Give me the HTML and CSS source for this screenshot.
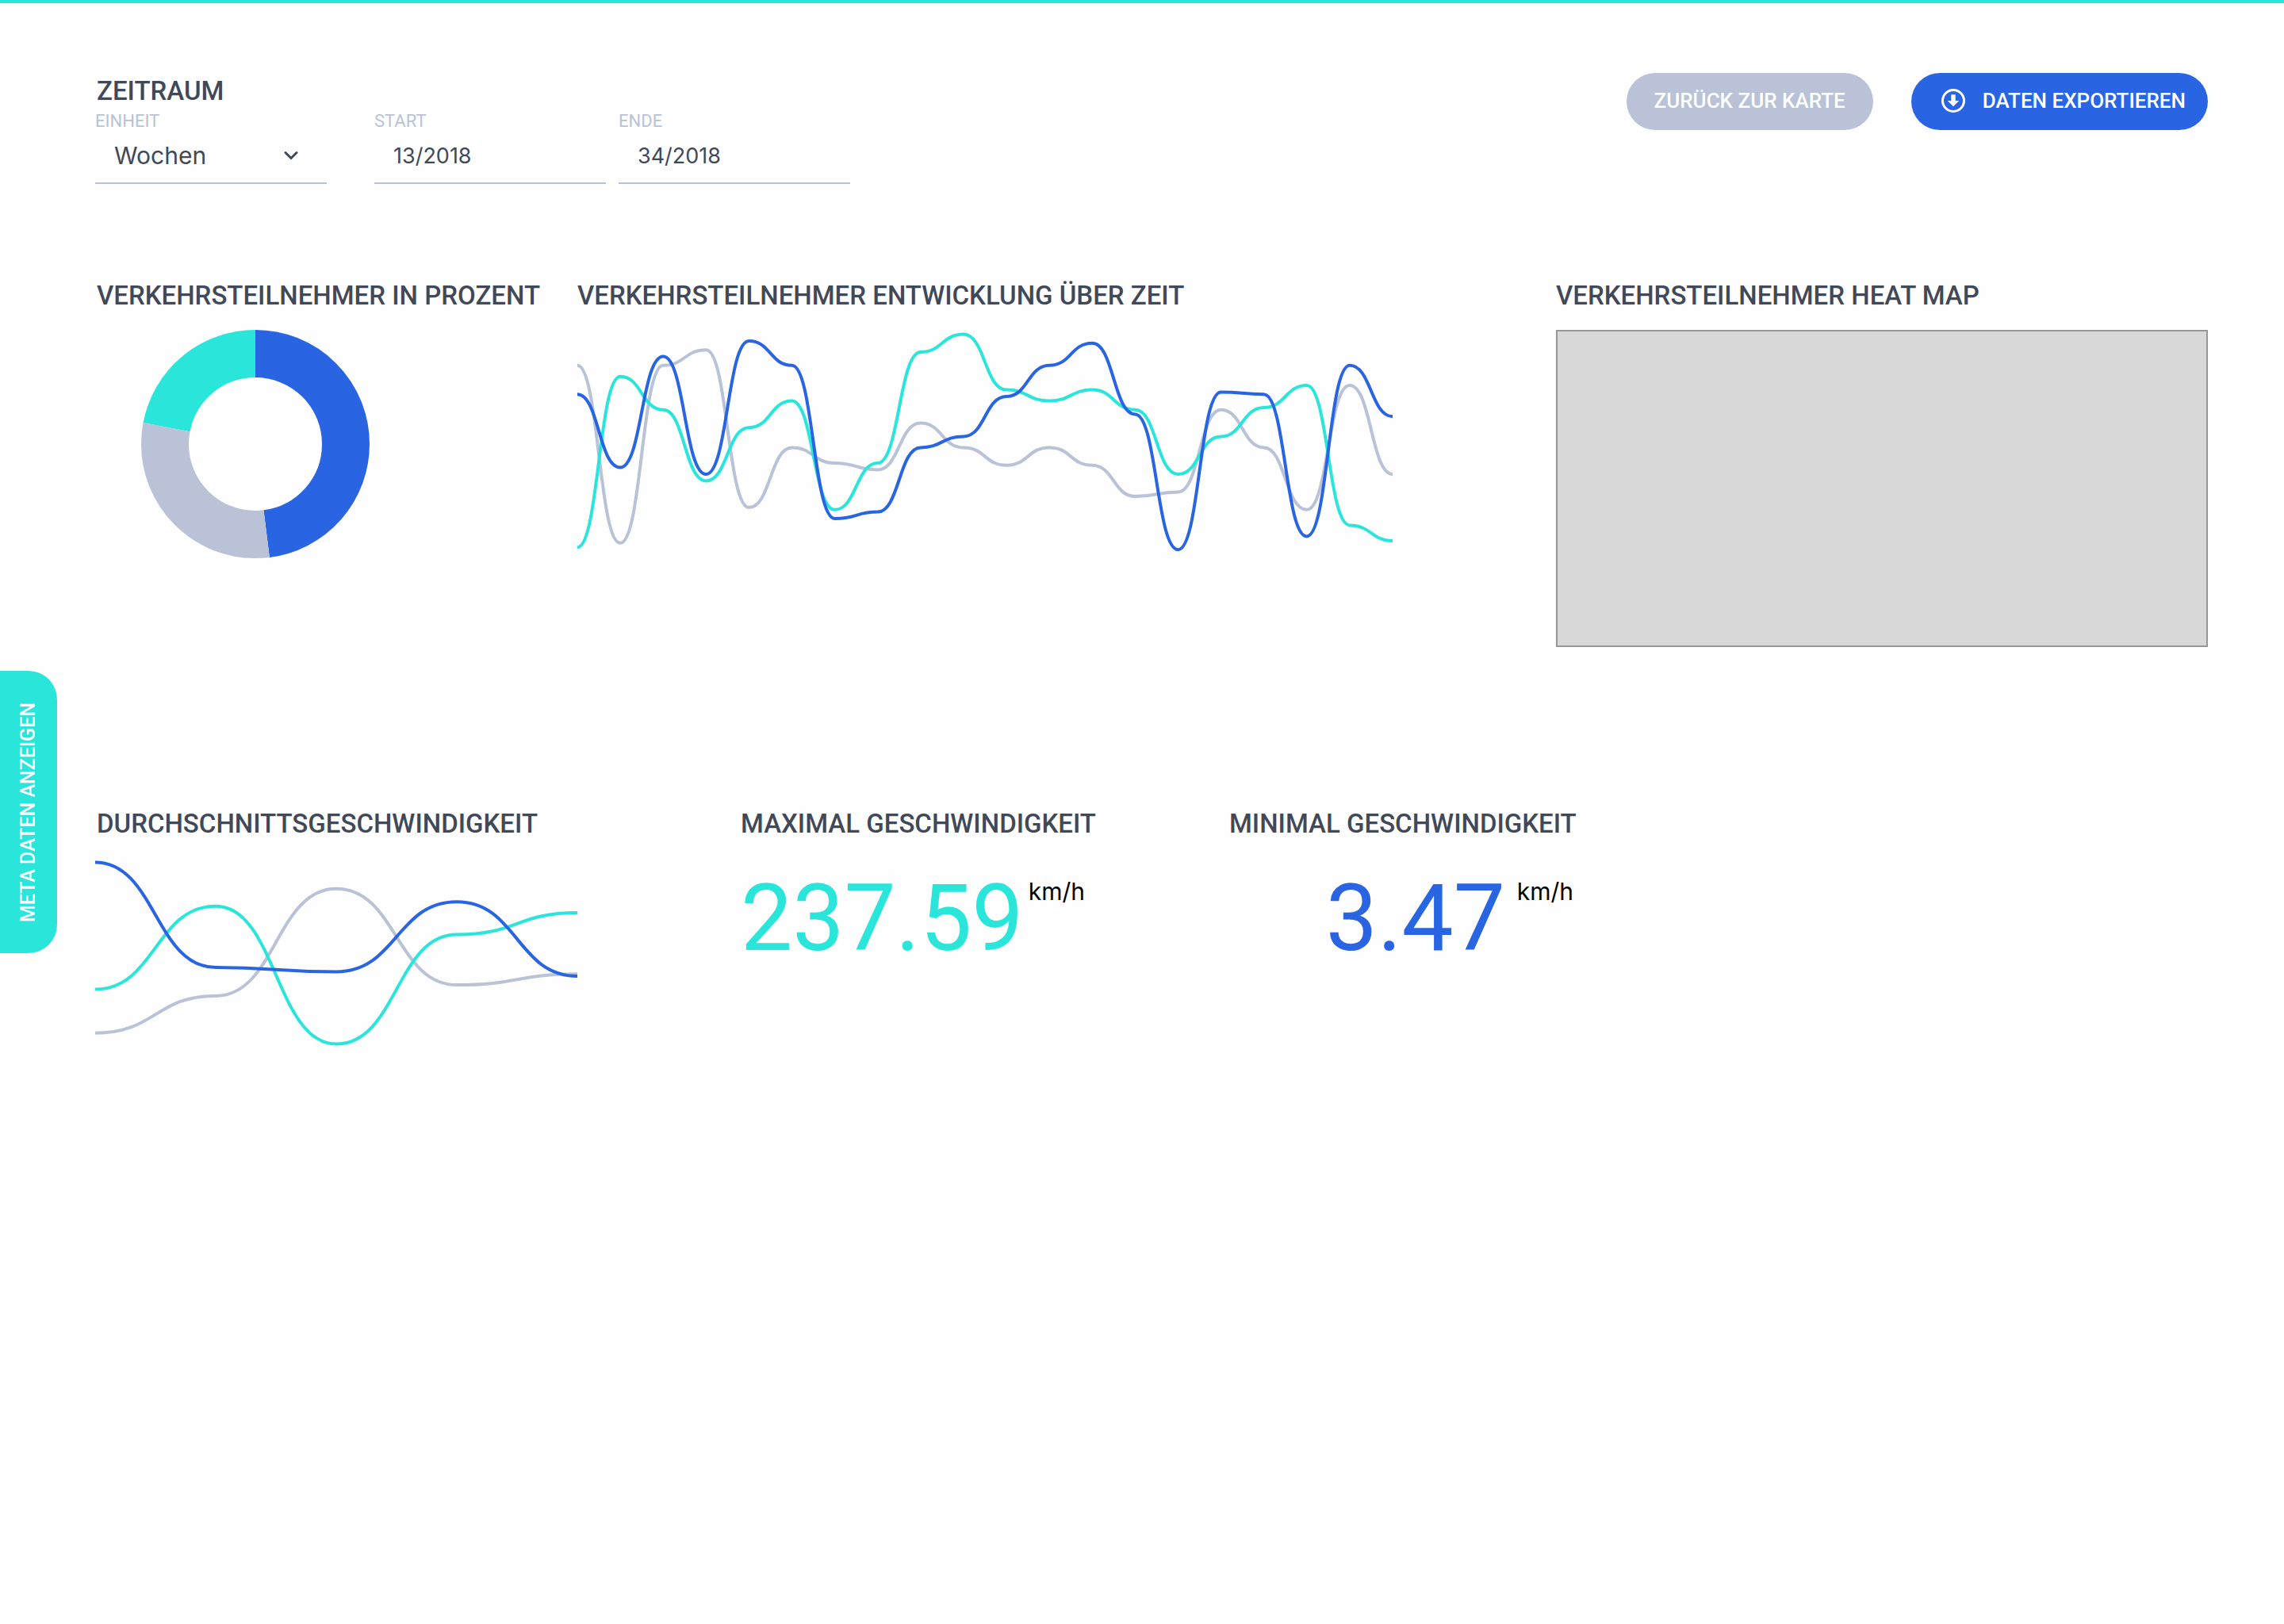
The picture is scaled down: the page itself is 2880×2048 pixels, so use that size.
FILE: index.html
```html
<!DOCTYPE html>
<html lang="de">
<head>
<meta charset="utf-8">
<meta name="viewport" content="width=device-width, initial-scale=1">
<title>Verkehrsdaten</title>
<link rel="stylesheet" href="styles.css">
</head>
<body>
<header class="header">
  <form class="period">
    <h2 class="title title-edge">ZEITRAUM</h2>
    <div class="fields">
      <div class="field field-unit">
        <label class="label" for="unit">EINHEIT</label>
        <div class="select-wrap">
          <select class="control control-select" id="unit"><option>Wochen</option><option>Monate</option></select>
          <svg class="chevron" viewBox="0 0 18 12" aria-hidden="true"><path d="M2 2.500l7 7 7-7"/></svg>
        </div>
      </div>
      <div class="field">
        <label class="label" for="start">START</label>
        <input class="control" id="start" type="text" value="13/2018">
      </div>
      <div class="field">
        <label class="label" for="end">ENDE</label>
        <input class="control" id="end" type="text" value="34/2018">
      </div>
    </div>
  </form>
  <div class="actions">
    <button class="button button-muted" type="button">ZURÜCK ZUR KARTE</button>
    <button class="button button-primary" type="button">
      <svg class="icon" viewBox="0 0 30 30" aria-hidden="true"><circle cx="15" cy="15" r="13.5"/><path d="M12.300 7.300h5.400V15h4.600L15 22.300 7.700 15h4.600z"/></svg>
      DATEN EXPORTIEREN
    </button>
  </div>
</header>

<main>
  <div class="row row-top">
    <section class="panel">
      <h2 class="title title-edge">VERKEHRSTEILNEHMER IN PROZENT</h2>
      <svg class="donut" viewBox="0 0 288 288" role="img" aria-label="Verkehrsteilnehmer in Prozent">
        <g transform="rotate(-90 144 144)">
          <circle class="line-blue" cx="144" cy="144" r="114" pathLength="100" stroke-dasharray="48 52"/>
          <circle class="line-gray" cx="144" cy="144" r="114" pathLength="100" stroke-dasharray="30 70" stroke-dashoffset="-48"/>
          <circle class="line-teal" cx="144" cy="144" r="114" pathLength="100" stroke-dasharray="22 78" stroke-dashoffset="-78"/>
        </g>
      </svg>
    </section>
    <section class="panel panel-spaced">
      <h2 class="title">VERKEHRSTEILNEHMER ENTWICKLUNG ÜBER ZEIT</h2>
      <svg class="chart chart-time" viewBox="0 0 190 100" preserveAspectRatio="none" role="img" aria-label="Entwicklung über Zeit">
        <path class="line-gray" d="M0 16C5 16 5 96 10 96S15 16 20 16S25 9 30 9S35 80 40 80S45 53 50 53S55 60 60 60S65 63 70 63S75 42 80 42S85 53 90 53S95 61 100 61S105 53 110 53S115 61 120 61S125 75 130 75S135 73 140 73S145 36 150 36S155 53 160 53S165 81 170 81S175 25 180 25S185 65 190 65"/>
        <path class="line-teal" d="M0 98C5 98 5 21 10 21S15 36 20 36S25 68 30 68S35 44 40 44S45 32 50 32S55 81 60 81S65 60 70 60S75 10 80 10S85 2 90 2S95 27 100 27S105 32 110 32S115 27 120 27S125 36 130 36S135 65 140 65S145 48 150 48S155 35 160 35S165 25 170 25S175 88 180 88S185 95 190 95"/>
        <path class="line-blue" d="M0 29C5 29 5 62 10 62S15 12 20 12S25 65 30 65S35 5 40 5S45 16 50 16S55 85 60 85S65 82 70 82S75 53 80 53S85 48 90 48S95 30 100 30S105 16 110 16S115 6 120 6S125 38 130 38S135 99 140 99S145 28 150 28S155 29 160 29S165 93 170 93S175 16 180 16S185 39 190 39"/>
      </svg>
    </section>
    <section class="panel">
      <h2 class="title">VERKEHRSTEILNEHMER HEAT MAP</h2>
      <div class="heatmap"></div>
    </section>
  </div>

  <div class="row row-speed">
    <section class="panel panel-spaced">
      <h2 class="title title-edge">DURCHSCHNITTSGESCHWINDIGKEIT</h2>
      <svg class="chart chart-speed" viewBox="0 0 40 100" preserveAspectRatio="none" role="img" aria-label="Durchschnittsgeschwindigkeit">
        <path class="line-gray" d="M0 80C5 80 5 63 10 63S15 14 20 14S25 58 30 58S35 53 40 53"/>
        <path class="line-teal" d="M0 60C5 60 5 22 10 22S15 85 20 85S25 35 30 35S35 25 40 25"/>
        <path class="line-blue" d="M0 2C5 2 5 50 10 50S15 52 20 52S25 20 30 20S35 54 40 54"/>
      </svg>
    </section>
    <section class="panel">
      <h2 class="title">MAXIMAL GESCHWINDIGKEIT</h2>
      <p class="stat"><span class="value value-teal">237.59</span><span class="unit">km/h</span></p>
    </section>
    <section class="panel">
      <h2 class="title">MINIMAL GESCHWINDIGKEIT</h2>
      <p class="stat"><span class="value value-blue">3.47</span><span class="unit">km/h</span></p>
    </section>
  </div>
</main>

<button class="meta-tab" type="button">META DATEN ANZEIGEN</button>
</body>
</html>
```
FILE: styles.css
```css
:root {
  --teal: #29e5da;
  --blue: #2965e3;
  --gray: #b9c2d7;
  --dark: #414857;
}

* {
  box-sizing: border-box;
}

body {
  margin: 0;
  min-height: 100vh;
  padding: 0 96px 0 120px;
  border-top: 4px solid var(--teal);
  background: linear-gradient(#fff, #fefefe 300px);
  color: var(--dark);
  font-family: Roboto, sans-serif;
}

.header {
  display: flex;
  justify-content: space-between;
  align-items: flex-start;
  padding-top: 88px;
}

.title {
  margin: 0;
  font-size: 33px;
  line-height: 46px;
  font-weight: 500;
  white-space: nowrap;
}

.title-edge {
  padding-left: 2px;
}

.fields {
  display: flex;
  gap: 16px;
}

.field {
  display: flex;
  flex-direction: column;
  width: 292px;
}

.field-unit {
  margin-right: 44px;
}

.label {
  color: var(--gray);
  font-size: 22px;
  line-height: 30px;
}

.select-wrap {
  position: relative;
}

.control {
  display: block;
  width: 100%;
  height: 64px;
  margin: 0;
  padding: 0 24px 6px;
  border: 0;
  border-bottom: 2px solid var(--gray);
  border-radius: 0;
  background: none;
  appearance: none;
  color: var(--dark);
  font-family: Inter, sans-serif;
  font-size: 27px;
  font-weight: 400;
}

.control-select {
  font-size: 30px;
}

.chevron {
  position: absolute;
  right: 36px;
  top: 22px;
  width: 18px;
  height: 12px;
  fill: none;
  stroke: var(--dark);
  stroke-width: 3;
  stroke-linecap: round;
  pointer-events: none;
}

.actions {
  display: flex;
  gap: 48px;
}

.button {
  display: flex;
  align-items: center;
  height: 72px;
  padding: 0 35px 2px;
  border: 0;
  border-radius: 36px;
  color: #fff;
  font-family: inherit;
  font-size: 26px;
  font-weight: 500;
  white-space: nowrap;
}

.button-muted {
  background: var(--gray);
}

.button-primary {
  gap: 22px;
  padding: 0 28px 2px 38px;
  background: var(--blue);
}

.icon {
  width: 30px;
  height: 30px;
  fill: none;
  stroke: #fff;
  stroke-width: 3;
}

.icon path {
  fill: #fff;
  stroke: none;
}

.row {
  display: grid;
}

.row-top {
  grid-template-columns: 608fr 1234fr 822fr;
  margin-top: 118px;
}

.row-speed {
  grid-template-columns: 814fr 616fr 1234fr;
  margin-top: 200px;
}

.panel {
  display: flex;
  flex-direction: column;
  gap: 20px;
  min-width: 0;
}

.panel-spaced {
  padding-right: 206px;
}

.donut {
  width: 288px;
  height: 288px;
  margin-left: 58px;
  fill: none;
  stroke-width: 60;
}

.chart {
  width: 100%;
  fill: none;
  stroke-width: 4;
}

.chart path {
  vector-effect: non-scaling-stroke;
}

.chart-time {
  height: 280px;
}

.chart-speed {
  height: 276px;
}

.line-blue {
  stroke: var(--blue);
}

.line-gray {
  stroke: var(--gray);
}

.line-teal {
  stroke: var(--teal);
}

.heatmap {
  height: 400px;
  border: 2px solid #979797;
  background: #d8d8d8;
}

.stat {
  display: flex;
  justify-content: space-between;
  width: 434px;
  margin: 0;
}

.value {
  min-width: 348px;
  font-size: 116px;
  line-height: 152px;
  text-align: right;
}

.value-teal {
  color: var(--teal);
}

.value-blue {
  color: var(--blue);
}

.unit {
  padding-top: 24px;
  color: #000;
  font-family: Inter, sans-serif;
  font-size: 30px;
  font-weight: 400;
  line-height: 36px;
}

.meta-tab {
  position: fixed;
  left: 0;
  top: 50%;
  width: 72px;
  height: 356px;
  margin-top: -178px;
  padding: 0;
  border: 0;
  border-radius: 36px 0 0 36px;
  background: var(--teal);
  color: #fff;
  font-family: inherit;
  font-size: 25px;
  font-weight: 500;
  writing-mode: vertical-rl;
  transform: rotate(180deg);
}
```
